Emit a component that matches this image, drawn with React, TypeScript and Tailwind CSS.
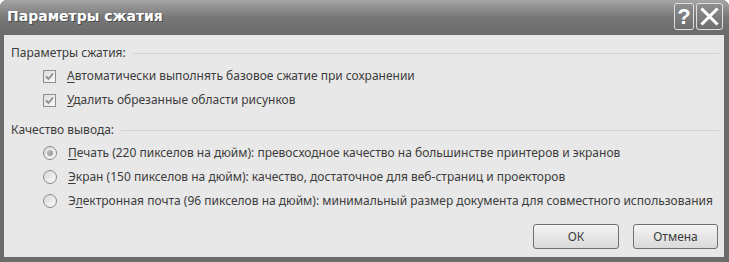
import React from "react";

const font = { fontFamily: '"Noto Sans", "Open Sans", sans-serif' };

function Check() {
  return (
    <div className="w-[13px] h-[13px] border border-[#8e8e8e] bg-gradient-to-br from-[#dcdcdc] to-[#fafafa] flex items-center justify-center shrink-0">
      <svg width="11" height="11" viewBox="0 0 11 11">
        <path d="M2 5.5 L4.5 8 L9 2.5" fill="none" stroke="#8c8c8c" strokeWidth="1.8" />
      </svg>
    </div>
  );
}

function Radio({ on }: { on?: boolean }) {
  return (
    <div className="w-[14px] h-[14px] rounded-full border border-[#8a8a8a] bg-gradient-to-br from-[#d8d8d8] to-[#fbfbfb] flex items-center justify-center shrink-0">
      {on && <div className="w-[6px] h-[6px] rounded-full bg-gradient-to-br from-[#c8c8c8] to-[#8e8e8e]" />}
    </div>
  );
}

function Header({ text }: { text: string }) {
  return (
    <div className="flex items-center h-[16px] pl-[7px] pr-[5px]">
      <span className="text-[12px] text-[#3c3c3c] whitespace-nowrap">{text}</span>
      <div className="flex-1 ml-[7px] border-t border-[#d2d2d2]" />
    </div>
  );
}

function Row({ icon, children, h = "h-[24px]" }: { icon: React.ReactNode; children: React.ReactNode; h?: string }) {
  return (
    <div className={`flex items-center ${h} pl-[39px]`}>
      {icon}
      <span className="ml-[11px] text-[12px] text-[#3c3c3c] whitespace-nowrap">{children}</span>
    </div>
  );
}

export default function App() {
  return (
    <div className="w-[729px] h-[262px] bg-[#6b6b6b] rounded-t-[7px] flex flex-col overflow-hidden" style={font}>
      <div className="h-[35px] shrink-0 flex items-center justify-between pl-[7px] pr-[6px] bg-gradient-to-b from-[#a6a6a6] via-[#777777] to-[#6b6b6b]">
        <span
          className="text-white font-bold text-[14px] pb-[2px]"
          style={{ fontFamily: '"DejaVu Sans", Verdana, sans-serif', textShadow: "1px 1px 0 #4a4a4a" }}
        >
          Параметры сжатия
        </span>
        <div className="flex items-center gap-[2px] pb-[3px]">
          <div className="w-[20px] h-[27px] rounded-[3px] border border-[#e0e0e0] bg-gradient-to-b from-[#8e8e8e] to-[#6e6e6e] flex items-center justify-center text-white font-bold text-[22px]" style={{ fontFamily: '"Liberation Sans", Arial, sans-serif' }}>
            ?
          </div>
          <div className="w-[27px] h-[27px] rounded-[3px] border border-[#e0e0e0] bg-gradient-to-b from-[#8e8e8e] to-[#6e6e6e] flex items-center justify-center">
            <svg width="19" height="19" viewBox="0 0 19 19">
              <path d="M2.5 2.5 L16.5 16.5 M16.5 2.5 L2.5 16.5" stroke="white" strokeWidth="3" strokeLinecap="square" />
            </svg>
          </div>
        </div>
      </div>
      <div className="flex-1 ml-[4px] mr-[5px] mb-[5px] bg-[#e8e8e8] flex flex-col pt-[10px]">
        <Header text="Параметры сжатия:" />
        <div className="mt-[3px]">
          <Row icon={<Check />}>
            <span className="underline underline-offset-2">А</span>втоматически выполнять базовое сжатие при сохранении
          </Row>
          <Row icon={<Check />}>
            <span className="underline underline-offset-2">У</span>далить обрезанные области рисунков
          </Row>
        </div>
        <div className="mt-[10px]">
          <Header text="Качество вывода:" />
        </div>
        <div className="mt-[3px]">
          <Row icon={<Radio on />}>
            <span className="underline underline-offset-2">П</span>ечать (220 пикселов на дюйм): превосходное качество на большинстве принтеров и экранов
          </Row>
          <Row icon={<Radio />}>
            <span className="underline underline-offset-2">Э</span>кран (150 пикселов на дюйм): качество, достаточное для веб-страниц и проекторов
          </Row>
          <Row icon={<Radio />} h="h-[23px]">
            Э<span className="underline underline-offset-2">л</span>ектронная почта (96 пикселов на дюйм): минимальный размер документа для совместного использования
          </Row>
        </div>
        <div className="flex justify-end gap-[14px] pr-[6px] mt-[12px]">
          <button className="w-[86px] h-[25px] rounded-[3px] border border-[#707070] bg-gradient-to-b from-[#f4f4f4] to-[#dadada] text-[12px] text-[#3c3c3c]">
            ОК
          </button>
          <button className="w-[85px] h-[25px] rounded-[3px] border border-[#707070] bg-gradient-to-b from-[#f4f4f4] to-[#dadada] text-[12px] text-[#3c3c3c]">
            Отмена
          </button>
        </div>
      </div>
    </div>
  );
}
